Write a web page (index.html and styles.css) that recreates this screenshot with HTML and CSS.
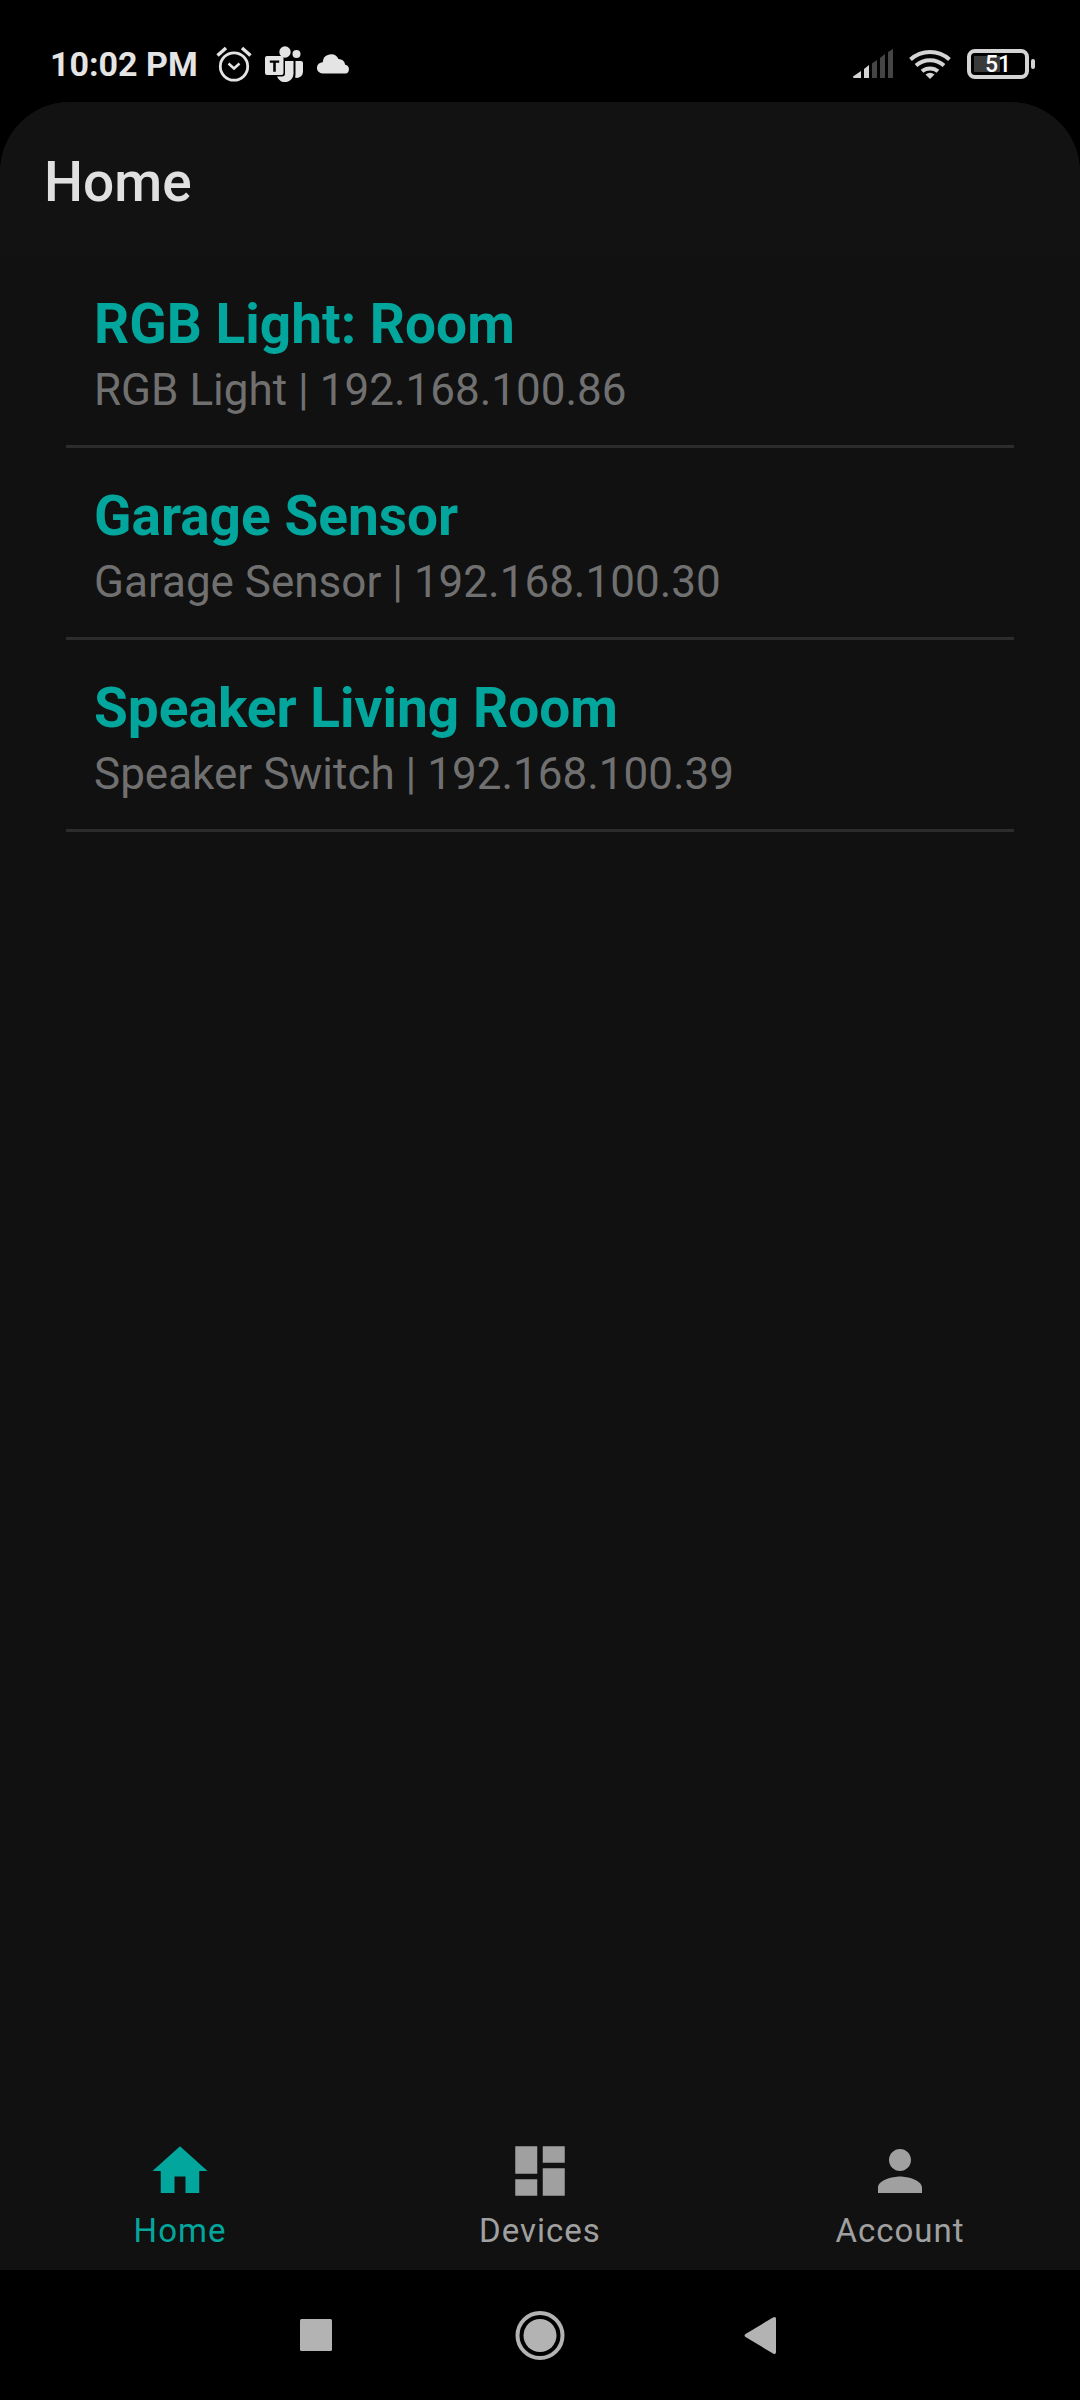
FILE: index.html
```html
<!DOCTYPE html>
<html lang="en">
<head>
<meta charset="utf-8">
<meta name="viewport" content="width=device-width, initial-scale=1">
<title>Home</title>
<link rel="stylesheet" href="styles.css">
</head>
<body>
<div class="status-bar">
  <div class="status-group">
    <time class="clock">10:02 PM</time>
    <svg class="status-alarm" width="36" height="36" viewBox="0 0 36 36" fill="none" stroke="#e4e4e4" stroke-width="2.800" aria-hidden="true">
      <circle cx="18" cy="20.500" r="13.700"/>
      <path d="M12.500 17.500l5.500 5 5.500-5" stroke-width="2.500"/>
      <path d="M1.500 9.500L10 2M34.500 9.500L26 2" stroke-width="3.500"/>
    </svg>
    <svg class="status-teams" width="38" height="36" viewBox="0 0 38 36" fill="#e4e4e4" aria-hidden="true">
      <circle cx="20" cy="6" r="5.700"/>
      <circle cx="31.500" cy="8" r="4"/>
      <path d="M20 15h8.500v13a8.500 8.500 0 0 1-16.500 2.500H17a3 3 0 0 0 3-3z"/>
      <path d="M30.500 15h5.500a2 2 0 0 1 2 2v9a6 6 0 0 1-8 5.500q.5-1.500.5-3.500z"/>
      <path fill-rule="evenodd" d="M2 10h14.500a2 2 0 0 1 2 2v15a2 2 0 0 1-2 2H2a2 2 0 0 1-2-2V12a2 2 0 0 1 2-2zM4.800 14.500v2.300h3.400v9h2.600v-9h3.400v-2.300z"/>
    </svg>
    <svg class="status-cloud" width="34" height="20" viewBox="0 0 34 20" fill="#e4e4e4" aria-hidden="true">
      <path d="M5.500 19.500a5.500 5.500 0 0 1 .2-11.300A8.300 8.300 0 0 1 21.500 5a7 7 0 0 1 6.700 5.700A4.600 4.600 0 0 1 29 19.500z"/>
    </svg>
  </div>
  <div class="status-group">
    <svg width="40" height="30" viewBox="0 0 40 30" aria-hidden="true">
      <g fill="#d4d4d4"><path d="M0 27.500L8 22v7H1q-1 0-1-1.500z"/><path d="M11 20l5-4v13h-5z"/></g>
      <g fill="#454545"><path d="M19 14.500l5-3.500v18h-5z"/><path d="M27 9l5-4v24h-5z"/><path d="M35 3l5-3v29h-5z"/></g>
    </svg>
    <svg class="status-wifi" width="42" height="30" viewBox="0 0 42 30" fill="none" stroke="#d4d4d4" stroke-width="4" aria-hidden="true">
      <path d="M1.500 10.500a29 29 0 0 1 39 0"/>
      <path d="M7 16.500a21 21 0 0 1 28 0"/>
      <path d="M13 22.300a12.500 12.500 0 0 1 16 0"/>
      <path d="M21 30l-4.500-4.500q4.500-3.500 9 0z" fill="#d4d4d4" stroke="none"/>
    </svg>
    <div class="battery"><div class="battery-body"><span class="battery-level">51</span></div><div class="battery-tip"></div></div>
  </div>
</div>

<div class="app">
  <header class="app-bar"><h1 class="app-title">Home</h1></header>
  <main class="content">
    <ul class="device-list">
      <li><a class="device" href="#rgb-light"><span class="device-name">RGB Light: Room</span><span class="device-info">RGB Light | 192.168.100.86</span></a></li>
      <li><a class="device" href="#garage-sensor"><span class="device-name">Garage Sensor</span><span class="device-info">Garage Sensor | 192.168.100.30</span></a></li>
      <li><a class="device" href="#speaker"><span class="device-name">Speaker Living Room</span><span class="device-info">Speaker Switch | 192.168.100.39</span></a></li>
    </ul>
  </main>
  <nav class="tabs">
    <a class="tab tab-active" href="#home" aria-current="page">
      <svg class="tab-icon" viewBox="0 0 24 24" aria-hidden="true"><path d="M10 20v-6h4v6h5v-8h3L12 3 2 12h3v8z"/></svg>
      <span>Home</span>
    </a>
    <a class="tab" href="#devices">
      <svg class="tab-icon" viewBox="0 0 24 24" aria-hidden="true"><path d="M3 13h8V3H3v10zm0 8h8v-6H3v6zm10 0h8V11h-8v10zm0-18v6h8V3h-8z"/></svg>
      <span>Devices</span>
    </a>
    <a class="tab" href="#account">
      <svg class="tab-icon" viewBox="0 0 24 24" aria-hidden="true"><path d="M12 12c2.210 0 4-1.790 4-4s-1.790-4-4-4-4 1.790-4 4 1.790 4 4 4zm0 2c-2.670 0-8 1.340-8 4v2h16v-2c0-2.660-5.330-4-8-4z"/></svg>
      <span>Account</span>
    </a>
  </nav>
</div>

<div class="system-nav">
  <button class="system-button" type="button" aria-label="Recent apps">
    <svg width="50" height="50" viewBox="0 0 50 50"><rect x="9" y="9" width="32" height="32" rx="1.500"/></svg>
  </button>
  <button class="system-button" type="button" aria-label="Home screen">
    <svg width="50" height="50" viewBox="0 0 50 50"><circle cx="25" cy="25.500" r="16.500"/><circle cx="25" cy="25.500" r="22.500" fill="none" stroke="#b3b3b3" stroke-width="4"/></svg>
  </button>
  <button class="system-button" type="button" aria-label="Back">
    <svg width="50" height="50" viewBox="0 0 50 50"><path d="M6.500 24L34 7.500q3-1.500 3 1.500v33q0 3-3 1.500L6.500 27q-2-1.500 0-3z"/></svg>
  </button>
</div>
</body>
</html>
```
FILE: styles.css
```css
* {
  box-sizing: border-box;
}

body {
  margin: 0;
  min-height: 100vh;
  display: flex;
  flex-direction: column;
  background: #000;
  font-family: Roboto, "Liberation Sans", sans-serif;
}

/* Status bar */
.status-bar {
  height: 102px;
  padding: 26px 45px 0 50px;
  display: flex;
  align-items: center;
  justify-content: space-between;
}

.status-group {
  display: flex;
  align-items: center;
}

.clock {
  margin-right: 18px;
  color: #e4e4e4;
  font-size: 34px;
  line-height: 40px;
  font-weight: 700;
}

.status-teams {
  margin: 0 14px 0 13px;
}

.status-wifi {
  margin: 0 16px;
}

.battery {
  display: flex;
  align-items: center;
  gap: 2px;
}

.battery-body {
  width: 62px;
  height: 30px;
  padding-top: 2px;
  display: flex;
  align-items: center;
  justify-content: center;
  border: 4px solid #d4d4d4;
  border-radius: 8px;
  background: linear-gradient(#3a3a3a, #3a3a3a) 3px 3px / 26px 16px no-repeat;
}

.battery-level {
  color: #fff;
  font-size: 23px;
  line-height: 24px;
  font-weight: 500;
}

.battery-tip {
  width: 4px;
  height: 10px;
  border-radius: 2px;
  background: #d4d4d4;
}

/* App surface */
.app {
  flex: 1;
  display: flex;
  flex-direction: column;
  overflow: hidden;
  border-radius: 70px 70px 0 0;
  background: #111;
}

.app-bar {
  padding: 48px 44px 42px;
  background: #121212;
}

.app-title {
  margin: 0;
  color: #e0e0e0;
  font-size: 55px;
  line-height: 64px;
  font-weight: 500;
}

.content {
  flex: 1;
  padding: 0 66px;
}

.device-list {
  margin: 0;
  padding: 0;
  list-style: none;
}

.device {
  padding: 36px 28px 29px;
  display: flex;
  flex-direction: column;
  gap: 8px;
  border-bottom: 3px solid #2c2c2c;
  text-decoration: none;
}

.device-name {
  color: #03a69c;
  font-size: 55px;
  line-height: 64px;
  font-weight: 700;
}

.device-info {
  color: #707070;
  font-size: 44px;
  line-height: 52px;
}

/* Bottom tabs */
.tabs {
  padding: 16px 0 19px;
  display: grid;
  grid-template-columns: repeat(3, 1fr);
}

.tab {
  display: flex;
  flex-direction: column;
  align-items: center;
  gap: 7px;
  color: #a0a0a0;
  font-size: 33px;
  line-height: 40px;
  letter-spacing: 1px;
  text-decoration: none;
}

.tab-active {
  color: #03a69c;
}

.tab-icon {
  width: 66px;
  height: 66px;
  fill: currentColor;
}

/* System navigation */
.system-nav {
  height: 130px;
  display: flex;
  align-items: center;
  justify-content: center;
  gap: 174px;
}

.system-button {
  padding: 0;
  border: 0;
  background: none;
  fill: #b3b3b3;
}

.system-button svg {
  display: block;
}
```
